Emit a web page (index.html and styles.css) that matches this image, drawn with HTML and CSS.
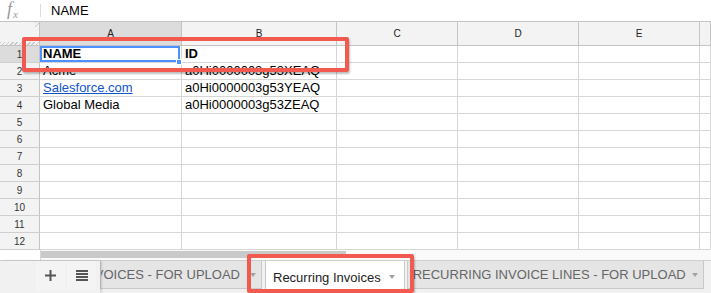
FILE: index.html
```html
<!DOCTYPE html>
<html lang="en">
<head>
  <meta charset="UTF-8">
  <meta name="viewport" content="width=device-width, initial-scale=1.0">
  <title>Recurring Invoices - Sheet</title>
  <link rel="stylesheet" href="styles.css">
</head>
<body>
  <div class="formula-bar">
    <span class="fx">f<span class="fx-sub">x</span></span>
    <span class="fbar-sep"></span>
    <span class="fbar-value">NAME</span>
  </div>

  <div class="sheet" id="sheet">
    <div class="corner"><span class="freeze-col"></span></div>
    <div class="col-head is-sel">A</div>
    <div class="col-head">B</div>
    <div class="col-head">C</div>
    <div class="col-head">D</div>
    <div class="col-head">E</div>
    <div class="col-head"></div>
  </div>

  <div class="hscroll">
    <div class="hscroll-gutter"></div>
    <div class="hscroll-thumb"></div>
  </div>

  <div class="tabbar">
    <div class="tab-tools">
      <div class="tool-btn">
        <svg width="11" height="11" viewBox="0 0 11 11"><rect x="4.5" y="0" width="2" height="11" fill="#555"/><rect x="0" y="4.5" width="11" height="2" fill="#555"/></svg>
      </div>
      <div class="tool-btn">
        <svg width="12" height="11" viewBox="0 0 12 11"><rect y="0" width="12" height="2" fill="#555"/><rect y="3" width="12" height="2" fill="#555"/><rect y="6" width="12" height="2" fill="#555"/><rect y="9" width="12" height="2" fill="#555"/></svg>
      </div>
    </div>
    <div class="tabs">
      <div class="tab tab-clipped"><span>RECURRING INVOICES - FOR UPLOAD</span><span class="caret"></span></div>
      <div class="tab is-active"><span>Recurring Invoices</span><span class="caret"></span></div>
      <div class="tab tab-last"><span>RECURRING INVOICE LINES - FOR UPLOAD</span><span class="caret"></span></div>
    </div>
  </div>

  <div class="callout callout-header"></div>
  <div class="callout callout-tab"></div>

  <script>
    const data = [
      ['NAME', 'ID'],
      ['Acme', 'a0Hi0000003g53XEAQ'],
      ['Salesforce.com', 'a0Hi0000003g53YEAQ'],
      ['Global Media', 'a0Hi0000003g53ZEAQ']
    ];
    const sheet = document.getElementById('sheet');

    for (let r = 0; r < 12; r++) {
      const head = document.createElement('div');
      head.className = 'row-head' + (r === 0 ? ' is-sel' : '');
      head.innerText = r + 1;
      sheet.appendChild(head);

      for (let c = 0; c < 6; c++) {
        const cell = document.createElement('div');
        cell.className = 'cell';
        const value = (data[r] || [])[c] || '';
        if (r === 0) cell.classList.add('bold');
        if (value === 'Salesforce.com') {
          cell.innerHTML = '<a href="#">' + value + '</a>';
        } else {
          cell.innerText = value;
        }
        if (r === 0 && c === 0) {
          cell.classList.add('is-active');
          cell.innerHTML += '<span class="selection"></span><span class="handle"></span>';
        }
        sheet.appendChild(cell);
      }
    }
  </script>
</body>
</html>
```

FILE: styles.css
```css
* { box-sizing: border-box; }
body {
  margin: 0;
  width: 711px;
  height: 293px;
  overflow: hidden;
  position: relative;
  font-family: "Liberation Sans", Arial, sans-serif;
  font-size: 13px;
  color: #000;
  background: #fff;
}

/* formula bar */
.formula-bar {
  height: 21px;
  display: flex;
  align-items: center;
}
.fx {
  width: 40px;
  padding-left: 7px;
  font-family: "Liberation Serif", serif;
  font-style: italic;
  font-size: 18px;
  line-height: 17px;
  color: #999;
}
.fx-sub { font-size: 11px; position: relative; top: 3px; left: 1px; }
.fbar-sep { width: 1px; height: 13px; background: #dcdcdc; }
.fbar-value { padding-left: 10px; }

/* grid */
.sheet {
  display: grid;
  grid-template-columns: 40px 142px 155px 121px 121px 121px 1fr;
  grid-template-rows: 24px repeat(12, 17px);
  border-top: 1px solid #c4c4c4;
}
.sheet > div {
  border-right: 1px solid #d6d6d6;
  border-bottom: 1px solid #d6d6d6;
  white-space: nowrap;
  overflow: hidden;
}
.corner {
  position: relative;
  background: #f3f3f3;
  border-color: #c4c4c4 !important;
}
.corner::after {
  content: "";
  position: absolute;
  left: 0; right: 0; bottom: 0;
  height: 3px;
  background: repeating-linear-gradient(135deg, #c8c8c8 0 1px, #f3f3f3 1px 3px);
}
.freeze-col {
  position: absolute;
  top: 0; right: 0;
  width: 4px;
  height: 5px;
  background: repeating-linear-gradient(135deg, #c8c8c8 0 1px, #f3f3f3 1px 3px);
}
.col-head {
  background: #f3f3f3;
  border-color: #c4c4c4 !important;
  display: flex;
  align-items: center;
  justify-content: center;
  font-size: 10px;
  color: #222;
}
.row-head {
  background: #f3f3f3;
  border-right-color: #c4c4c4 !important;
  border-bottom-color: #cfcfcf !important;
  display: flex;
  align-items: center;
  justify-content: center;
  font-size: 10px;
  color: #333;
}
.col-head.is-sel, .row-head.is-sel { background: #dcdcdc; }
.cell {
  padding-left: 3px;
  line-height: 16px;
}
.cell.bold { font-weight: bold; }
.cell a { color: #1155cc; }
.cell.is-active {
  position: relative;
  overflow: visible !important;
  z-index: 2;
}
.selection {
  position: absolute;
  left: 0; top: 0; right: 1px; bottom: 0;
  border: 2px solid #4d90fe;
}
.handle {
  position: absolute;
  right: -1px; bottom: -3px;
  width: 6px; height: 6px;
  background: #4d90fe;
  border: 1px solid #fff;
}

/* horizontal scroller */
.hscroll {
  height: 11px;
  display: flex;
  border-bottom: 1px solid #cfcfcf;
  background: #fafafa;
}
.hscroll-gutter { width: 41px; background: #fff; border-right: 1px solid #d6d6d6; }
.hscroll-thumb {
  width: 305px;
  height: 7px;
  margin-top: 1px;
  background: #c9c9c9;
}

/* sheet tabs */
.tabbar {
  height: 32px;
  display: flex;
  background: #f1f1f1;
}
.tab-tools {
  width: 100px;
  flex: none;
  display: flex;
  gap: 2px;
  padding: 0 3px 3px 36px;
  box-shadow: 2px 0 2px rgba(0, 0, 0, 0.12);
  position: relative;
  z-index: 1;
}
.tool-btn {
  width: 29px;
  display: flex;
  align-items: center;
  justify-content: center;
  background: #f4f4f4;
}
.tabs {
  flex: 1;
  display: flex;
  gap: 2px;
  overflow: hidden;
  align-items: flex-start;
}
.tabs .tab-clipped { margin-right: 1px; }
.tab {
  flex: none;
  height: 28px;
  display: flex;
  align-items: center;
  gap: 8px;
  padding: 0 9px 0 7px;
  white-space: nowrap;
  background: #e5e5e5;
  border: 1px solid #c9c9c9;
  border-top: none;
  color: #666;
}
.tab-clipped {
  width: 162px;
  gap: 10px;
  padding-right: 5px;
  justify-content: flex-end;
  overflow: hidden;
}
.tab.is-active {
  height: 32px;
  background: #fff;
  color: #222;
  border-bottom: none;
}
.tab-last { padding: 0 5px 0 5px; gap: 6px; }
.caret {
  flex: none;
  width: 0; height: 0;
  border-left: 3.5px solid transparent;
  border-right: 3.5px solid transparent;
  border-top: 4px solid #a3a3a3;
}

/* red annotation boxes */
.callout {
  position: absolute;
  border: 4px solid #f2594f;
  border-radius: 2px;
  box-shadow: 1px 2px 2px rgba(0, 0, 0, 0.25);
  z-index: 5;
}
.callout-header { left: 22px; top: 37px; width: 327px; height: 35px; }
.callout-tab { left: 247px; top: 254px; width: 167px; height: 39px; }
```
